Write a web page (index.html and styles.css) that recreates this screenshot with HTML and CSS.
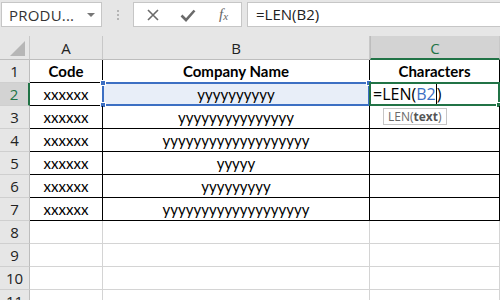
FILE: index.html
```html
<!DOCTYPE html>
<html>
<head>
<meta charset="utf-8">
<link rel="stylesheet" href="styles.css">
</head>
<body>
<div class="toolbar">
  <div class="namebox"><span class="nbtext">PRODU...</span><span class="caret"></span></div>
  <div class="grip"><i></i><i></i><i></i></div>
  <div class="fbtns">
    <svg class="ic" width="14" height="14" viewBox="0 0 14 14"><path d="M2 2 L12 12 M12 2 L2 12" stroke="#6a6a6a" stroke-width="1.6" fill="none"/></svg>
    <svg class="ic" width="16" height="14" viewBox="0 0 16 14"><path d="M1.5 7.5 L6 12 L14.5 2.5" stroke="#6a6a6a" stroke-width="2.6" fill="none"/></svg>
    <span class="fx">f<sub>x</sub></span>
  </div>
  <div class="fbar">=LEN(B2)</div>
</div>
<div class="sheet">
  <div class="h corner"><span class="tri"></span></div>
  <div class="h">A</div>
  <div class="h">B</div>
  <div class="h hsel">C</div>

  <div class="rh">1</div>
  <div class="c t b">Code</div>
  <div class="c t b">Company Name</div>
  <div class="c t b">Characters</div>

  <div class="rh rsel">2</div>
  <div class="c t">xxxxxx</div>
  <div class="c t ref">yyyyyyyyyy
    <span class="refbox"><i class="hd tl"></i><i class="hd bl"></i><i class="hd tr"></i></span>
  </div>
  <div class="c t act"><span class="edit">=LEN(<span class="blue">B2</span><span class="cursor"></span>)</span>
    <span class="actbox"><i class="fill"></i></span>
    <span class="tip">LEN(<b>text</b>)</span>
  </div>

  <div class="rh">3</div>
  <div class="c t">xxxxxx</div>
  <div class="c t">yyyyyyyyyyyyyyy</div>
  <div class="c t"></div>

  <div class="rh">4</div>
  <div class="c t">xxxxxx</div>
  <div class="c t">yyyyyyyyyyyyyyyyyyy</div>
  <div class="c t"></div>

  <div class="rh">5</div>
  <div class="c t">xxxxxx</div>
  <div class="c t">yyyyy</div>
  <div class="c t"></div>

  <div class="rh">6</div>
  <div class="c t">xxxxxx</div>
  <div class="c t">yyyyyyyyy</div>
  <div class="c t"></div>

  <div class="rh">7</div>
  <div class="c t">xxxxxx</div>
  <div class="c t">yyyyyyyyyyyyyyyyyyy</div>
  <div class="c t"></div>

  <div class="rh">8</div>
  <div class="c"></div>
  <div class="c"></div>
  <div class="c"></div>

  <div class="rh">9</div>
  <div class="c"></div>
  <div class="c"></div>
  <div class="c"></div>

  <div class="rh">10</div>
  <div class="c"></div>
  <div class="c"></div>
  <div class="c"></div>

  <div class="rh">11</div>
  <div class="c"></div>
  <div class="c"></div>
  <div class="c"></div>
</div>
</body>
</html>
```
FILE: styles.css
```css
* { box-sizing: border-box; }
html, body { margin: 0; padding: 0; }
body {
  width: 500px;
  height: 300px;
  overflow: hidden;
  background: #e6e6e6;
  font-family: "Open Sans", "Noto Sans", sans-serif;
}
.toolbar {
  display: flex;
  align-items: flex-start;
  height: 36px;
  padding: 2px 0 0 1px;
}
.namebox {
  width: 101px;
  height: 25px;
  background: #fff;
  border: 1px solid #c6c6c6;
  display: flex;
  align-items: center;
  justify-content: space-between;
  padding: 0 6px 0 7px;
}
.nbtext {
  font-size: 15px;
  color: #333;
  letter-spacing: 0.2px;
}
.caret {
  width: 0;
  height: 0;
  border-left: 4px solid transparent;
  border-right: 4px solid transparent;
  border-top: 4px solid #777;
}
.grip {
  width: 31px;
  height: 25px;
  display: flex;
  flex-direction: column;
  align-items: center;
  justify-content: center;
  gap: 2px;
}
.grip i {
  display: block;
  width: 2px;
  height: 2px;
  background: #b4b4b4;
}
.fbtns {
  width: 109px;
  height: 25px;
  background: #fff;
  border: 1px solid #c6c6c6;
  display: flex;
  align-items: center;
  padding-left: 12px;
}
.fbtns .ic { display: block; }
.fbtns .ic + .ic { margin-left: 20px; }
.fx {
  margin-left: 23px;
  font-family: "Liberation Serif", serif;
  font-style: italic;
  font-size: 15px;
  color: #666;
  line-height: 1;
}
.fx sub { font-size: 11px; vertical-align: -1px; }
.fbar {
  margin-left: 5px;
  flex: 1;
  height: 25px;
  background: #fff;
  border: 1px solid #c6c6c6;
  border-right: none;
  font-size: 15px;
  color: #222;
  line-height: 23px;
  padding-left: 8px;
}
.sheet {
  display: grid;
  grid-template-columns: 30px 73px 267px 130px;
  grid-template-rows: 24px repeat(11, 23px);
  background: #fff;
}
.h {
  background: #e6e6e6;
  border-right: 1px solid #c8c8c8;
  border-bottom: 1px solid #bdbdbd;
  text-align: center;
  font-size: 15px;
  line-height: 24px;
  color: #222;
}
.corner { position: relative; }
.tri {
  position: absolute;
  right: 4px;
  bottom: 3px;
  width: 0;
  height: 0;
  border-left: 15px solid transparent;
  border-bottom: 15px solid #b6b6b6;
}
.hsel {
  background: #d3d3d3;
  color: #217346;
  border-bottom: 2px solid #217346;
  border-left: 1px solid #bdbdbd;
}
.rh {
  background: #e6e6e6;
  border-right: 1px solid #bdbdbd;
  border-bottom: 1px solid #cfcfcf;
  text-align: center;
  font-size: 15px;
  line-height: 22px;
  color: #222;
}
.rsel {
  background: #d3d3d3;
  color: #217346;
  border-right: 2px solid #217346;
}
.c {
  position: relative;
  border-right: 1px solid #d4d4d4;
  border-bottom: 1px solid #d4d4d4;
  font-family: Lato, "Open Sans", sans-serif;
  font-size: 15px;
  line-height: 22px;
  text-align: center;
  color: #000;
}
.c.t {
  border-right-color: #000;
  border-bottom-color: #000;
}
.b { font-weight: bold; }
.ref { background: #e8eef8; }
.refbox {
  position: absolute;
  left: -1px;
  top: -1px;
  right: -1px;
  bottom: -1px;
  border: 2px solid #3c6fc3;
}
.hd {
  position: absolute;
  width: 6px;
  height: 6px;
  background: #3c6fc3;
  border: 1px solid #fff;
}
.hd.tl { left: -4px; top: -4px; }
.hd.bl { left: -4px; bottom: -4px; }
.hd.tr { right: -4px; top: -4px; }
.act { text-align: left; }
.edit {
  display: inline-flex;
  align-items: stretch;
  padding-left: 3px;
  font-size: 16px;
  line-height: 22px;
  font-family: "Open Sans", sans-serif;
}
.blue { color: #3c6fc3; }
.cursor {
  display: inline-block;
  width: 1px;
  background: #000;
  margin-top: 1px;
}
.actbox {
  position: absolute;
  left: -1px;
  top: -1px;
  right: -1px;
  bottom: -1px;
  border: 2px solid #217346;
}
.fill {
  position: absolute;
  right: -4px;
  bottom: -4px;
  width: 6px;
  height: 6px;
  background: #217346;
  border: 1px solid #fff;
}
.tip {
  position: absolute;
  left: 13px;
  top: 25px;
  height: 17px;
  padding: 0 4px;
  background: #fff;
  border: 1px solid #c6c6c6;
  font-family: "Open Sans", sans-serif;
  font-size: 12px;
  line-height: 15px;
  color: #6a6a6a;
  white-space: nowrap;
  z-index: 2;
}
.tip b { color: #555; }
```
